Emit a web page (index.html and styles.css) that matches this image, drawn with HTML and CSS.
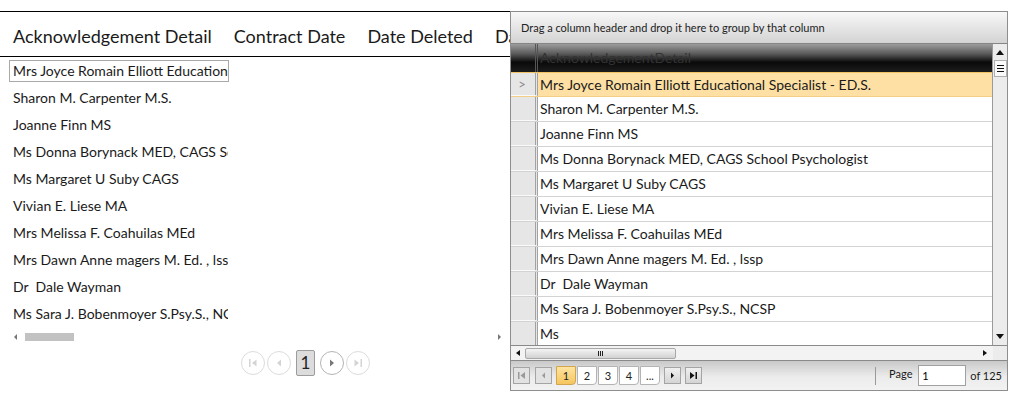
FILE: index.html
```html
<!DOCTYPE html>
<html lang="en">
<head>
  <meta charset="UTF-8">
  <title>Acknowledgement Details</title>
  <link rel="stylesheet" href="styles.css">
</head>
<body>
  <div class="page">
    <!-- Plain list view -->
    <section class="list-view">
      <div class="list-header">
        <span>Acknowledgement Detail</span>
        <span>Contract Date</span>
        <span>Date Deleted</span>
        <span>Date Entered</span>
      </div>
      <ul class="list-rows">
        <li class="selected">Mrs Joyce Romain Elliott Educational Specialist - ED.S.</li>
        <li>Sharon M. Carpenter M.S.</li>
        <li>Joanne Finn MS</li>
        <li>Ms Donna Borynack MED, CAGS School Psychologist</li>
        <li>Ms Margaret U Suby CAGS</li>
        <li>Vivian E. Liese MA</li>
        <li>Mrs Melissa F. Coahuilas MEd</li>
        <li>Mrs Dawn Anne magers M. Ed. , lssp</li>
        <li>Dr&nbsp; Dale Wayman</li>
        <li>Ms Sara J. Bobenmoyer S.Psy.S., NCSP</li>
      </ul>
      <div class="list-scroll">
        <span class="tri tri-left"></span>
        <span class="list-thumb"></span>
        <span class="fill"></span>
        <span class="tri tri-right"></span>
      </div>
      <div class="list-pager">
        <button class="round" disabled>
          <svg width="10" height="10" viewBox="0 0 10 10"><rect x="1" y="1" width="1.5" height="8"/><path d="M8.5 1.5 L4 5 L8.5 8.5z"/></svg>
        </button>
        <button class="round" disabled>
          <svg width="10" height="10" viewBox="0 0 10 10"><path d="M7 1.5 L3 5 L7 8.5z"/></svg>
        </button>
        <span class="page-current">1</span>
        <button class="round active">
          <svg width="10" height="10" viewBox="0 0 10 10"><path d="M3 1.5 L7 5 L3 8.5z"/></svg>
        </button>
        <button class="round" disabled>
          <svg width="10" height="10" viewBox="0 0 10 10"><path d="M1.5 1.5 L6 5 L1.5 8.5z"/><rect x="7.5" y="1" width="1.5" height="8"/></svg>
        </button>
      </div>
    </section>

    <!-- Grid window -->
    <section class="grid-window">
      <div class="group-panel">Drag a column header and drop it here to group by that column</div>
      <div class="grid-body">
        <div class="grid-main">
          <div class="grid-header">
            <span class="indicator"></span>
            <span class="cell">AcknowledgementDetail</span>
          </div>
          <div class="grid-row current"><span class="indicator">&gt;</span><span class="cell">Mrs Joyce Romain Elliott Educational Specialist - ED.S.</span></div>
          <div class="grid-row"><span class="indicator"></span><span class="cell">Sharon M. Carpenter M.S.</span></div>
          <div class="grid-row"><span class="indicator"></span><span class="cell">Joanne Finn MS</span></div>
          <div class="grid-row"><span class="indicator"></span><span class="cell">Ms Donna Borynack MED, CAGS School Psychologist</span></div>
          <div class="grid-row"><span class="indicator"></span><span class="cell">Ms Margaret U Suby CAGS</span></div>
          <div class="grid-row"><span class="indicator"></span><span class="cell">Vivian E. Liese MA</span></div>
          <div class="grid-row"><span class="indicator"></span><span class="cell">Mrs Melissa F. Coahuilas MEd</span></div>
          <div class="grid-row"><span class="indicator"></span><span class="cell">Mrs Dawn Anne magers M. Ed. , lssp</span></div>
          <div class="grid-row"><span class="indicator"></span><span class="cell">Dr&nbsp; Dale Wayman</span></div>
          <div class="grid-row"><span class="indicator"></span><span class="cell">Ms Sara J. Bobenmoyer S.Psy.S., NCSP</span></div>
          <div class="grid-row"><span class="indicator"></span><span class="cell">Ms</span></div>
        </div>
        <div class="vscroll">
          <span class="tri tri-up"></span>
          <span class="v-thumb"><i></i><i></i><i></i></span>
          <span class="fill"></span>
          <span class="tri tri-down"></span>
        </div>
      </div>
      <div class="hscroll">
        <div class="h-track">
          <span class="tri tri-left dark"></span>
          <span class="h-thumb"><i></i><i></i><i></i></span>
          <span class="fill"></span>
          <span class="tri tri-right dark"></span>
        </div>
        <div class="corner"></div>
      </div>
      <div class="pager">
        <button class="pbtn off">
          <svg width="9" height="9" viewBox="0 0 9 9"><rect x="1" y="1" width="1.5" height="7"/><path d="M8 1 L3.5 4.5 L8 8z"/></svg>
        </button>
        <button class="pbtn off prev">
          <svg width="9" height="9" viewBox="0 0 9 9"><path d="M6 1.5 L3 4.5 L6 7.5z"/></svg>
        </button>
        <div class="numbers">
          <button class="num selected">1</button>
          <button class="num">2</button>
          <button class="num">3</button>
          <button class="num">4</button>
          <button class="num">...</button>
        </div>
        <button class="pbtn next">
          <svg width="9" height="9" viewBox="0 0 9 9"><path d="M3 1.5 L6 4.5 L3 7.5z"/></svg>
        </button>
        <button class="pbtn last">
          <svg width="9" height="9" viewBox="0 0 9 9"><path d="M1 1 L5.5 4.5 L1 8z"/><rect x="6.5" y="1" width="1.5" height="7"/></svg>
        </button>
        <span class="fill"></span>
        <span class="sep"></span>
        <label class="page-label">Page <input type="text" value="1"></label>
        <span class="page-total">of 125</span>
      </div>
    </section>
  </div>
</body>
</html>
```

FILE: styles.css
```css
/* Reset */
* {
  box-sizing: border-box;
  margin: 0;
  padding: 0;
}
body {
  font-family: 'Lato', 'Liberation Sans', sans-serif;
  background: #fff;
  color: #1a1a1a;
}
.page {
  display: flex;
  width: 1028px;
  height: 397px;
  padding-top: 11px;
}
.fill {
  flex: 1;
}

/* Scroll arrows */
.tri {
  width: 0;
  height: 0;
  border: 3px solid transparent;
}
.tri-left {
  border-right: 3px solid #777;
  border-left-width: 0;
}
.tri-right {
  border-left: 3px solid #777;
  border-right-width: 0;
}
.tri.dark.tri-left {
  border-right: 4px solid #111;
}
.tri.dark.tri-right {
  border-left: 4px solid #111;
}
.tri-up {
  border: 4px solid transparent;
  border-bottom: 5px solid #111;
  border-top-width: 0;
}
.tri-down {
  border: 4px solid transparent;
  border-top: 5px solid #111;
  border-bottom-width: 0;
}

/* List view */
.list-view {
  width: 510px;
  flex-shrink: 0;
  overflow: hidden;
}
.list-header {
  display: flex;
  gap: 22px;
  height: 46px;
  align-items: center;
  padding: 3px 0 0 13px;
  border-top: 1px solid #000;
  border-bottom: 1px solid #000;
  font-size: 18px;
  white-space: nowrap;
}
.list-header span {
  flex-shrink: 0;
}
.list-rows {
  list-style: none;
  padding-top: 3px;
}
.list-rows li {
  width: 220px;
  height: 22px;
  margin: 0 0 5px 9px;
  padding-left: 3px;
  border: 1px solid transparent;
  font-size: 14px;
  line-height: 20px;
  white-space: nowrap;
  overflow: hidden;
}
.list-rows li.selected {
  border-color: #a9a9a9;
}
.list-scroll {
  display: flex;
  align-items: center;
  height: 14px;
  padding: 0 9px 0 14px;
}
.list-thumb {
  width: 49px;
  height: 8px;
  margin-left: 8px;
  background: #c2c2c2;
}
.list-pager {
  display: flex;
  align-items: center;
  gap: 2px;
  height: 26px;
  margin-top: 6px;
  padding-left: 241px;
}
.round {
  width: 24px;
  height: 24px;
  border-radius: 50%;
  border: 1px solid #dcdcdc;
  background: #fff;
  display: flex;
  align-items: center;
  justify-content: center;
  fill: #d4d4d4;
}
.round.active {
  border-color: #b4b4b4;
  fill: #777;
}
.page-current {
  width: 19px;
  height: 26px;
  margin: 0 3px;
  border: 1px solid #9c9c9c;
  border-radius: 2px;
  background: #dcdcdc;
  font-size: 17px;
  line-height: 24px;
  text-align: center;
  color: #222;
}

/* Grid window */
.grid-window {
  width: 498px;
  height: 380px;
  flex-shrink: 0;
  border: 1px solid #8e8e8e;
  display: flex;
  flex-direction: column;
  background: #fff;
}
.group-panel {
  height: 32px;
  display: flex;
  align-items: center;
  padding-left: 10px;
  border-bottom: 1px solid #858585;
  background: linear-gradient(#f8f8f8, #d3d3d3);
  font-size: 11px;
  color: #222;
}
.grid-body {
  display: flex;
  height: 302px;
  border-bottom: 1px solid #8a8a8a;
}
.grid-main {
  flex: 1;
  overflow: hidden;
  border-right: 1px solid #9a9a9a;
}
.grid-header,
.grid-row {
  display: flex;
  white-space: nowrap;
  font-size: 14px;
}
.grid-header {
  height: 28px;
  line-height: 28px;
  background: linear-gradient(#9c9c9c 0%, #5a5a5a 35%, #0a0a0a 65%, #1c1c1c 100%);
  color: #333;
}
.indicator {
  width: 27px;
  flex-shrink: 0;
  border-right: 3px double #a2a2a2;
  background: #e6e6e6;
  border-bottom: 1px solid #fafafa;
  color: #8a8a8a;
  font-size: 13px;
  text-align: center;
  padding-right: 2px;
}
.grid-header .indicator {
  background: transparent;
  border-bottom: none;
  border-right-color: #555;
}
.cell {
  padding-left: 2px;
}
.grid-row {
  height: 25px;
  line-height: 24px;
  border-bottom: 1px solid #d3d3d3;
}
.grid-row.current {
  background: #ffe0a4;
  border-top: 1px solid #f3c466;
  border-bottom: 1px solid #f3cf86;
  line-height: 23px;
}
.vscroll {
  width: 14px;
  display: flex;
  flex-direction: column;
  align-items: center;
  padding: 6px 0 6px;
  background: #ececec;
}
.v-thumb {
  width: 13px;
  height: 17px;
  margin-top: 5px;
  border: 1px solid #b0b0b0;
  background: #fafafa;
  display: flex;
  flex-direction: column;
  justify-content: center;
  gap: 2px;
  padding: 0 2px;
}
.v-thumb i {
  height: 1px;
  background: #111;
}

/* Horizontal scrollbar */
.hscroll {
  display: flex;
  height: 15px;
  border-bottom: 1px solid #8a8a8a;
}
.h-track {
  flex: 1;
  display: flex;
  align-items: center;
  padding: 0 6px 0 5px;
  background: #f3f3f3;
}
.h-thumb {
  width: 151px;
  height: 11px;
  margin-left: 5px;
  border: 1px solid #a8a8a8;
  border-radius: 2px;
  background: linear-gradient(#f4f4f4, #d2d2d2);
  display: flex;
  justify-content: center;
  gap: 1px;
  padding: 2px 0;
}
.h-thumb i {
  width: 1px;
  background: #222;
}
.corner {
  width: 14px;
  background: #ececec;
}

/* Pager */
.pager {
  flex: 1;
  display: flex;
  align-items: center;
  padding: 0 5px 0 2px;
  background: linear-gradient(#c9c9c9, #ececec 55%, #f2f2f2);
  font-size: 11px;
}
.pbtn {
  width: 17px;
  height: 17px;
  border: 1px solid #a4a4a4;
  background: linear-gradient(#f0f0f0, #d4d4d4);
  display: flex;
  align-items: center;
  justify-content: center;
  fill: #111;
}
.pbtn.off {
  fill: #9a9a9a;
  background: #e2e2e2;
}
.pbtn.prev {
  margin-left: 5px;
}
.pbtn.next {
  margin-left: 4px;
}
.pbtn.last {
  margin-left: 4px;
}
.numbers {
  display: flex;
  gap: 1px;
  margin-left: 4px;
}
.num {
  width: 20px;
  height: 19px;
  border: 1px solid #b4b4b4;
  border-radius: 0 0 4px 0;
  background: #fff;
  font-family: 'Lato', 'Liberation Sans', sans-serif;
  font-size: 11px;
  color: #222;
}
.num.selected {
  background: linear-gradient(#fde4a0, #f6c65e);
  border-color: #d2a54c;
}
.sep {
  width: 1px;
  height: 18px;
  background: #9a9a9a;
  margin-right: 13px;
}
.page-label input {
  width: 48px;
  height: 21px;
  margin-left: 3px;
  padding-left: 3px;
  border: 1px solid #a0a0a0;
  font-family: 'Lato', 'Liberation Sans', sans-serif;
  font-size: 11px;
  vertical-align: middle;
}
.page-total {
  margin-left: 4px;
}
```
